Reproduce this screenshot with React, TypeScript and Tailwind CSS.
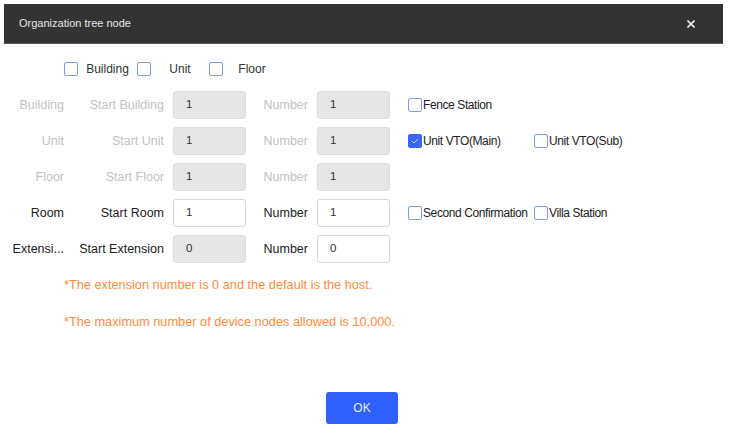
import React from "react";

type Row = {
  name: string;
  start: string;
  value: string;
  count: string;
  disabled: boolean;
  startDisabled?: boolean;
  checks: { label: string; checked?: boolean }[];
};

const ROWS: Row[] = [
  { name: "Building", start: "Start Building", value: "1", count: "1", disabled: true, checks: [{ label: "Fence Station" }] },
  {
    name: "Unit",
    start: "Start Unit",
    value: "1",
    count: "1",
    disabled: true,
    checks: [{ label: "Unit VTO(Main)", checked: true }, { label: "Unit VTO(Sub)" }],
  },
  { name: "Floor", start: "Start Floor", value: "1", count: "1", disabled: true, checks: [] },
  {
    name: "Room",
    start: "Start Room",
    value: "1",
    count: "1",
    disabled: false,
    checks: [{ label: "Second Confirmation" }, { label: "Villa Station" }],
  },
  { name: "Extension", start: "Start Extension", value: "0", count: "0", disabled: false, startDisabled: true, checks: [] },
];

function Box({ checked }: { checked?: boolean }) {
  return checked ? (
    <span className="w-[14px] h-[14px] shrink-0 rounded-[2px] bg-[#3a66f5] border border-[#3a66f5] flex items-center justify-center">
      <svg width="8" height="6" viewBox="0 0 8 6" fill="none">
        <path d="M1 3l2 2 4-4" stroke="#c9d6ff" strokeWidth="1" />
      </svg>
    </span>
  ) : (
    <span className="w-[14px] h-[14px] shrink-0 rounded-[2px] bg-white border border-[#8499ef]" />
  );
}

function Field({ value, disabled }: { value: string; disabled: boolean }) {
  return (
    <div
      className={`w-[73px] h-[28px] rounded-[3px] border pl-[12px] flex items-center text-[11.5px] text-[#333] ${
        disabled ? "bg-[#e6e6e6] border-[#dedede]" : "bg-white border-[#d9d9d9]"
      }`}
    >
      {value}
    </div>
  );
}

export default function App() {
  return (
    <div className="w-[734px] h-[445px] bg-white overflow-hidden font-['Liberation_Sans',Arial,sans-serif]">
      <div className="ml-[4px] mt-[4px] w-[719px]">
        {/* Header */}
        <div className="h-[40px] bg-[#333333] border-b border-[#5a5a5a] flex items-center justify-between pl-[15px] pr-[28px]">
          <span className="text-[11px] text-[#e6e6e6]">Organization tree node</span>
          <svg width="8" height="8" viewBox="0 0 8 8">
            <path d="M0.5 0.5l7 7M7.5 0.5l-7 7" stroke="#e8e8e8" strokeWidth="1.6" />
          </svg>
        </div>

        {/* Level checkboxes */}
        <div className="mt-[18px] ml-[60px] flex items-center h-[14px] text-[12px] text-[#333]">
          <Box />
          <span className="w-[59px] text-center">Building</span>
          <Box />
          <span className="w-[58px] text-center">Unit</span>
          <Box />
          <span className="w-[58px] text-center">Floor</span>
        </div>

        {/* Rows */}
        <div className="mt-[15px] flex flex-col gap-[8px]">
          {ROWS.map((r) => {
            const txt = r.disabled ? "text-[#c2c2c2]" : "text-[#222]";
            return (
              <div key={r.name} className="h-[28px] flex items-center text-[12.5px]">
                <span className={`ml-[6px] w-[54px] text-right truncate ${txt}`}>
                  {r.name === "Extension" ? "Extensi..." : r.name}
                </span>
                <span className={`ml-[14px] w-[86px] text-right whitespace-nowrap ${txt}`}>{r.start}</span>
                <div className="ml-[9px]">
                  <Field value={r.value} disabled={r.disabled || !!r.startDisabled} />
                </div>
                <span className={`ml-[8px] w-[54px] text-right ${txt}`}>Number</span>
                <div className="ml-[9px]">
                  <Field value={r.count} disabled={r.disabled} />
                </div>
                <div className="ml-[18px] flex items-center text-[12px] tracking-[-0.4px]">
                  {r.checks.map((c, i) => (
                    <div key={c.label} className={`flex items-center gap-[1px] ${i === 0 ? "w-[126px]" : ""}`}>
                      <Box checked={c.checked} />
                      <span className="text-[#222] whitespace-nowrap">{c.label}</span>
                    </div>
                  ))}
                </div>
              </div>
            );
          })}
        </div>

        {/* Notes */}
        <div className="mt-[14px] ml-[60px] text-[12.75px] leading-[16px] text-[#ff8c3d]">
          <p>*The extension number is 0 and the default is the host.</p>
          <p className="mt-[21px]">*The maximum number of device nodes allowed is 10,000.</p>
        </div>

        {/* Footer */}
        <div className="mt-[62px] ml-[322px]">
          <button className="w-[72px] h-[32px] rounded-[3px] bg-[#2f5ffe] text-[12px] text-[#e8ecff]">OK</button>
        </div>
      </div>
    </div>
  );
}
